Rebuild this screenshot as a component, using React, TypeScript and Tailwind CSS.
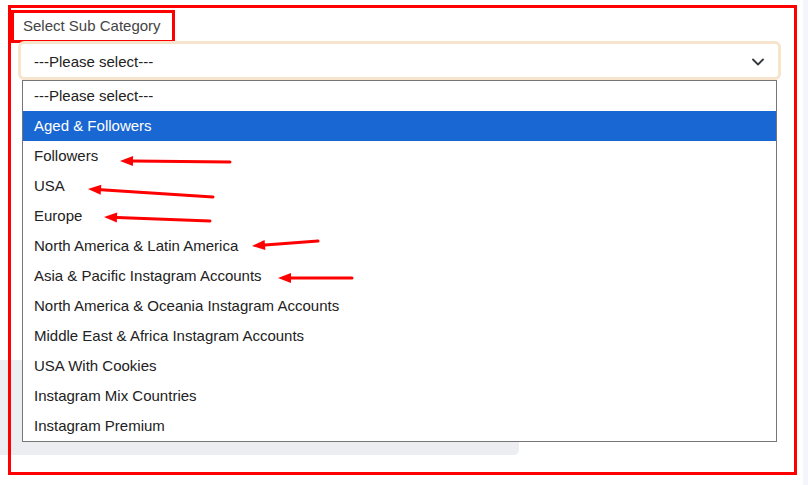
const options = [
  "---Please select---",
  "Aged & Followers",
  "Followers",
  "USA",
  "Europe",
  "North America & Latin America",
  "Asia & Pacific Instagram Accounts",
  "North America & Oceania Instagram Accounts",
  "Middle East & Africa Instagram Accounts",
  "USA With Cookies",
  "Instagram Mix Countries",
  "Instagram Premium",
]

// annotation arrows: [tailX, tailY, tipX, tipY]
const arrows = [
  [230, 162, 120, 161],
  [213, 197, 88, 189],
  [210, 221, 104, 217],
  [318, 241, 252, 246],
  [352, 278, 278, 278],
]

function Arrow({ x1, y1, x2, y2 }: { x1: number; y1: number; x2: number; y2: number }) {
  const a = Math.atan2(y2 - y1, x2 - x1)
  const len = 13
  const w = 5
  const bx = x2 - len * Math.cos(a)
  const by = y2 - len * Math.sin(a)
  const px = -Math.sin(a) * w
  const py = Math.cos(a) * w
  return (
    <g>
      <line x1={x1} y1={y1} x2={bx} y2={by} stroke="#f00" strokeWidth={3} strokeLinecap="round" />
      <polygon points={`${x2},${y2} ${bx + px},${by + py} ${bx - px},${by - py}`} fill="#f00" />
    </g>
  )
}

export default function App() {
  return (
    <div
      className="relative w-[808px] h-[485px] overflow-hidden bg-white flex"
      style={{ fontFamily: '"Liberation Sans", Arial, sans-serif' }}
    >
      {/* page underneath */}
      <div className="w-[803px] h-full">
        <div className="mt-[360px] w-[519px] h-[95px] bg-[#eceef1] rounded-br-[5px]" />
      </div>
      <div className="flex-1 bg-[#f4f6fb]" />

      {/* red annotation frame */}
      <div className="absolute left-[8px] top-[5px] w-[789px] h-[470px] border-[3px] border-[#ff0000]">
        <div className="mt-[2px] w-[164px] h-[33px] border-[3px] border-[#ff0000] flex items-center pl-[9px] text-[15px] text-[#444]">
          Select Sub Category
        </div>
        <div className="-mt-[2px] ml-[7px] w-[763px] h-[39px] border-[3px] border-[#f7e4cc] rounded-[6px] bg-white flex items-center justify-between pl-[13px] pr-[14px] pt-[3px] text-[15px] text-[#222]">
          <span>---Please select---</span>
          <svg width="12" height="8" viewBox="0 0 12 8" fill="none">
            <path d="M1 1.5l5 5 5-5" stroke="#343a40" strokeWidth="1.8" strokeLinecap="round" strokeLinejoin="round" />
          </svg>
        </div>

        {/* open dropdown list */}
        <div className="ml-[11px] w-[755px] border border-[#767676] bg-white text-[15px] text-[#222]">
          {options.map((o, i) => (
            <div
              key={o}
              className={
                i === 1
                  ? "h-[30px] flex items-center pl-[11px] pt-[1px] bg-[#1967d2] text-white"
                  : "h-[30px] flex items-center pl-[11px] pt-[1px]"
              }
            >
              {o}
            </div>
          ))}
        </div>
      </div>

      <svg className="absolute inset-0 pointer-events-none" width="808" height="485">
        {arrows.map(([x1, y1, x2, y2], i) => (
          <Arrow key={i} x1={x1} y1={y1} x2={x2} y2={y2} />
        ))}
      </svg>
    </div>
  )
}
